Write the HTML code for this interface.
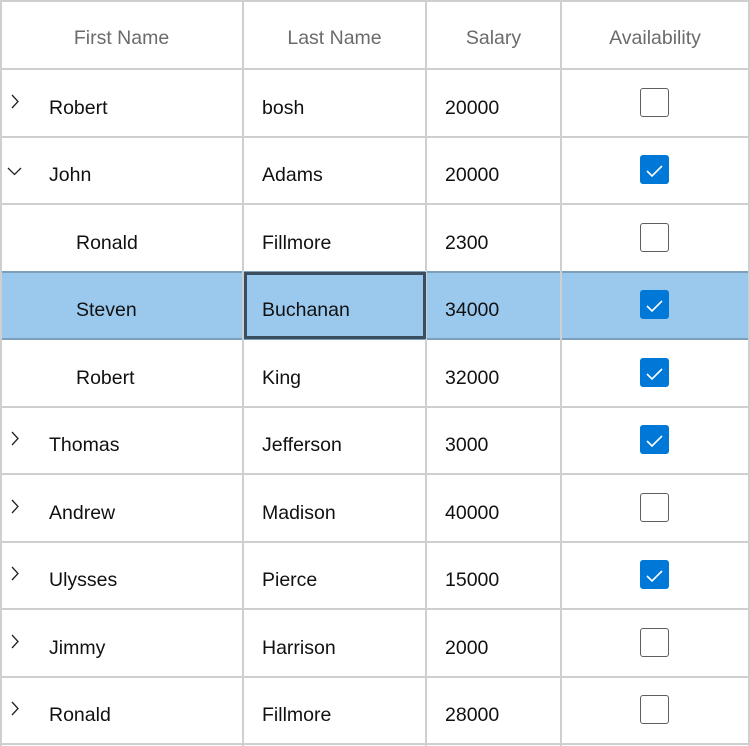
<!DOCTYPE html><html><head><style>
body{margin:0;width:750px;height:746px;background:#fff;position:relative;overflow:hidden;font-family:"Liberation Sans",sans-serif;}
.h{position:absolute;background:#cfcfcf;}
.t{position:absolute;font-size:19.5px;color:#111;line-height:24px;}
.hd{position:absolute;top:26px;font-size:19.5px;color:#6b6b6b;text-align:center;line-height:24px;}
.cb{position:absolute;left:640px;width:27px;height:27px;border:1.5px solid #5e5e5e;border-radius:3px;background:#fff;}
.cb.on{background:#0078d7;border-color:#0078d7;}
.ch{position:absolute;left:8px;}
</style></head><body>
<div style="position:absolute;left:0;top:272px;width:750px;height:67px;background:#9bc9ee"></div>
<div class="h" style="left:0;top:0;width:750px;height:2px"></div>
<div class="h" style="left:0;top:68px;width:750px;height:2px"></div>
<div class="h" style="left:0;top:136px;width:750px;height:2px"></div>
<div class="h" style="left:0;top:203px;width:750px;height:2px"></div>
<div class="h" style="left:0;top:271px;width:750px;height:2px;background:#7d9fbc"></div>
<div class="h" style="left:0;top:338px;width:750px;height:2px;background:#7d9fbc"></div>
<div class="h" style="left:0;top:406px;width:750px;height:2px"></div>
<div class="h" style="left:0;top:473px;width:750px;height:2px"></div>
<div class="h" style="left:0;top:541px;width:750px;height:2px"></div>
<div class="h" style="left:0;top:608px;width:750px;height:2px"></div>
<div class="h" style="left:0;top:676px;width:750px;height:2px"></div>
<div class="h" style="left:0;top:743px;width:750px;height:2px"></div>
<div class="h" style="left:0;top:0;width:2px;height:746px"></div>
<div class="h" style="left:242px;top:0;width:2px;height:746px"></div>
<div class="h" style="left:425px;top:0;width:2px;height:746px"></div>
<div class="h" style="left:560px;top:0;width:2px;height:746px"></div>
<div class="h" style="left:748px;top:0;width:2px;height:746px"></div>
<div style="position:absolute;left:244px;top:272px;width:176px;height:61px;border:3px solid #3b4e60"></div>

<div class="hd" style="left:0;width:243px">First Name</div>
<div class="hd" style="left:243px;width:183px">Last Name</div>
<div class="hd" style="left:426px;width:135px">Salary</div>
<div class="hd" style="left:561px;width:188px">Availability</div>

<svg width="750" height="746" style="position:absolute;left:0;top:0" fill="none" stroke="#222" stroke-width="1.3">
<path d="M12 95 L18 101.5 L12 108"/>
<path d="M8 168 L14.5 174.5 L21 168"/>
<path d="M12 432 L18 438.5 L12 445"/>
<path d="M12 500 L18 506.5 L12 513"/>
<path d="M12 567 L18 573.5 L12 580"/>
<path d="M12 635 L18 641.5 L12 648"/>
<path d="M12 702 L18 708.5 L12 715"/>
</svg>

<div class="t" style="left:49px;top:96px">Robert</div><div class="t" style="left:262px;top:96px">bosh</div><div class="t" style="left:445px;top:96px">20000</div>
<div class="t" style="left:49px;top:163px">John</div><div class="t" style="left:262px;top:163px">Adams</div><div class="t" style="left:445px;top:163px">20000</div>
<div class="t" style="left:76px;top:231px">Ronald</div><div class="t" style="left:262px;top:231px">Fillmore</div><div class="t" style="left:445px;top:231px">2300</div>
<div class="t" style="left:76px;top:298px">Steven</div><div class="t" style="left:262px;top:298px">Buchanan</div><div class="t" style="left:445px;top:298px">34000</div>
<div class="t" style="left:76px;top:366px">Robert</div><div class="t" style="left:262px;top:366px">King</div><div class="t" style="left:445px;top:366px">32000</div>
<div class="t" style="left:49px;top:433px">Thomas</div><div class="t" style="left:262px;top:433px">Jefferson</div><div class="t" style="left:445px;top:433px">3000</div>
<div class="t" style="left:49px;top:501px">Andrew</div><div class="t" style="left:262px;top:501px">Madison</div><div class="t" style="left:445px;top:501px">40000</div>
<div class="t" style="left:49px;top:568px">Ulysses</div><div class="t" style="left:262px;top:568px">Pierce</div><div class="t" style="left:445px;top:568px">15000</div>
<div class="t" style="left:49px;top:636px">Jimmy</div><div class="t" style="left:262px;top:636px">Harrison</div><div class="t" style="left:445px;top:636px">2000</div>
<div class="t" style="left:49px;top:703px">Ronald</div><div class="t" style="left:262px;top:703px">Fillmore</div><div class="t" style="left:445px;top:703px">28000</div>

<div class="cb" style="top:88px"></div>
<div class="cb on" style="top:155px"></div>
<div class="cb" style="top:223px"></div>
<div class="cb on" style="top:290px"></div>
<div class="cb on" style="top:358px"></div>
<div class="cb on" style="top:425px"></div>
<div class="cb" style="top:493px"></div>
<div class="cb on" style="top:560px"></div>
<div class="cb" style="top:628px"></div>
<div class="cb" style="top:695px"></div>
<svg width="750" height="746" style="position:absolute;left:0;top:0" fill="none" stroke="#fff" stroke-width="1.6">
<path d="M647 171 L652 176 L662 166"/>
<path d="M647 306 L652 311 L662 301"/>
<path d="M647 374 L652 379 L662 369"/>
<path d="M647 441 L652 446 L662 436"/>
<path d="M647 576 L652 581 L662 571"/>
</svg>
</body></html>
